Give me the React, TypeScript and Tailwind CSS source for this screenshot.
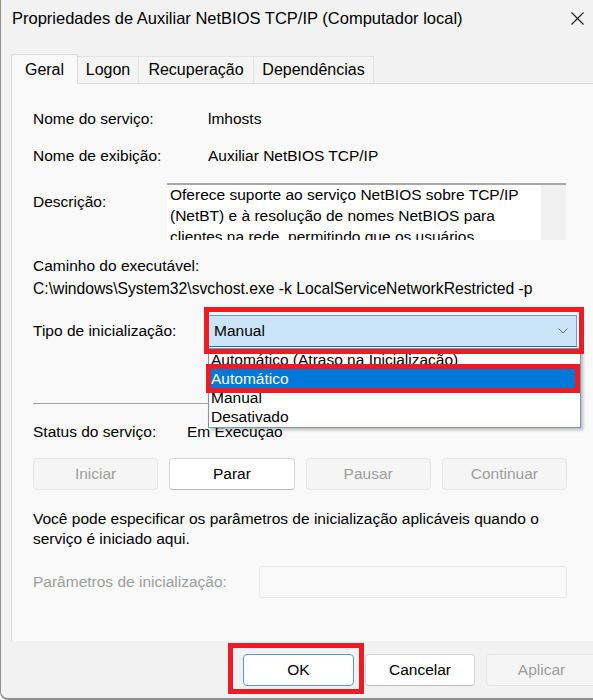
import { JSX } from "react";

const font = "font-['Liberation_Sans',Arial,sans-serif]";

function TabButton({ label, active }: { label: string; active?: boolean }) {
  if (active) {
    return (
      <div className="w-[67px] h-[30px] flex items-center justify-center bg-[#f9f9f9] border border-b-0 border-[#dcdcdc] rounded-t-[3px] -mb-px relative z-10 text-[16px] text-black">
        {label}
      </div>
    );
  }
  return (
    <div className="h-[27px] flex items-center justify-center bg-[#f4f4f4] border border-b-0 border-l-0 border-[#e3e3e3] text-[16px] text-black">
      {label}
    </div>
  );
}

function DialogButton({ label, disabled, primary }: { label: string; disabled?: boolean; primary?: boolean }) {
  const base = "h-[32px] flex items-center justify-center rounded-[4px] text-[15.5px]";
  if (disabled) {
    return <div className={`${base} bg-[#f5f5f5] border border-[#e6e6e6] text-[#9d9d9d]`}>{label}</div>;
  }
  if (primary) {
    return <div className={`${base} bg-white border border-[#5b9bd5] text-black`}>{label}</div>;
  }
  return (
    <div className={`${base} bg-white border border-[#d6d6d6] border-b-[#b9b9b9] text-black`}>{label}</div>
  );
}

export default function App(): JSX.Element {
  return (
    <div
      className={`${font} w-[593px] h-[700px] bg-[#f2f2f2] border-l border-b-2 border-[#8f8f8f] rounded-bl-[8px] flex flex-col overflow-hidden relative`}
    >
      {/* title bar */}
      <div className="h-[37px] flex items-center justify-between pl-[11px] pr-[8px] shrink-0">
        <div className="text-[16.5px] text-black">Propriedades de Auxiliar NetBIOS TCP/IP (Computador local)</div>
        <svg width="13" height="13" viewBox="0 0 13 13" className="mr-[1px]">
          <path d="M0.5 0.5 L12.5 12.5 M12.5 0.5 L0.5 12.5" stroke="#1a1a1a" strokeWidth="1.1" fill="none" />
        </svg>
      </div>

      {/* tabs */}
      <div className="mt-[17px] pl-[10px] flex items-end shrink-0">
        <TabButton label="Geral" active />
        <div className="w-[61px]">
          <TabButton label="Logon" />
        </div>
        <div className="w-[115px]">
          <TabButton label="Recuperação" />
        </div>
        <div className="w-[120px]">
          <TabButton label="Dependências" />
        </div>
      </div>

      {/* panel */}
      <div className="ml-[10px] h-[558px] bg-[#f9f9f9] border-l border-t border-[#dcdcdc] pl-[21px] text-[15.5px] text-black shrink-0 relative">
        <div className="flex mt-[25px] leading-[20px]">
          <div className="w-[175px]">Nome do serviço:</div>
          <div>lmhosts</div>
        </div>
        <div className="flex mt-[17px] leading-[20px]">
          <div className="w-[175px]">Nome de exibição:</div>
          <div>Auxiliar NetBIOS TCP/IP</div>
        </div>
        <div className="flex mt-[17px] items-start">
          <div className="w-[134px] mt-[9px] leading-[20px]">Descrição:</div>
          <div className="w-[399px] h-[57px] bg-white border-t-2 border-[#a8a8a8] flex overflow-hidden">
            <div className="flex-1 pl-[3px] leading-[21px] -mt-[1px]">
              Oferece suporte ao serviço NetBIOS sobre TCP/IP (NetBT) e à resolução de nomes NetBIOS para clientes na rede, permitindo que os usuários
            </div>
            <div className="w-[25px] bg-[#f0f0f0]" />
          </div>
        </div>
        <div className="mt-[16px] leading-[20px]">Caminho do executável:</div>
        <div className="mt-[3px] leading-[20px] text-[15.7px]">C:\windows\System32\svchost.exe -k LocalServiceNetworkRestricted -p</div>

        <div className="flex items-center mt-[16px]">
          <div className="w-[175px] leading-[20px]">Tipo de inicialização:</div>
          <div className="w-[369px] h-[32px] bg-[#cce4f7] border border-[#5c9fd6] border-b-[#0078d4] flex items-center justify-between pl-[5px] pr-[8px]">
            <span>Manual</span>
            <svg width="10" height="6" viewBox="0 0 10 6">
              <path d="M0.5 0.5 L5 5 L9.5 0.5" stroke="#6b6b6b" strokeWidth="1" fill="none" />
            </svg>
          </div>
        </div>

        <div className="mt-[56px] w-[534px] border-t border-[#a0a0a0]" />
        <div className="flex mt-[18px] leading-[20px]">
          <div className="w-[154px]">Status do serviço:</div>
          <div>Em Execução</div>
        </div>

        <div className="mt-[16px] w-[534px] grid grid-cols-4 gap-[11px]">
          <DialogButton label="Iniciar" disabled />
          <DialogButton label="Parar" />
          <DialogButton label="Pausar" disabled />
          <DialogButton label="Continuar" disabled />
        </div>

        <div className="mt-[19px] w-[540px] leading-[20px]">
          Você pode especificar os parâmetros de inicialização aplicáveis quando o serviço é iniciado aqui.
        </div>

        <div className="flex items-center mt-[17px]">
          <div className="w-[226px] leading-[20px] text-[#9d9d9d]">Parâmetros de inicialização:</div>
          <div className="w-[308px] h-[32px] bg-[#f9f9f9] border border-[#e8e8e8] rounded-[3px]" />
        </div>

        {/* open dropdown list */}
        <div className="absolute left-[196px] top-[264px] w-[373px] h-[80px] bg-white border border-[#7d95b8] shadow-[2px_2px_3px_rgba(0,0,0,0.25)] pt-[1px]">
          <div className="h-[19px] leading-[19px] pl-[2px]">Automático (Atraso na Inicialização)</div>
          <div className="h-[19px] leading-[19px] pl-[2px] bg-[#0078d7] text-white">Automático</div>
          <div className="h-[19px] leading-[19px] pl-[2px]">Manual</div>
          <div className="h-[19px] leading-[19px] pl-[2px]">Desativado</div>
        </div>

        {/* red markers */}
        <div className="absolute left-[192px] top-[223px] w-[380px] h-[47px] border-[5px] border-[#ed1c24]" />
        <div className="absolute left-[194px] top-[280px] w-[374px] h-[29px] border-[5px] border-[#ed1c24]" />
      </div>

      {/* footer */}
      <div className="flex-1 flex items-center pl-[242px] gap-[11px]">
        <div className="w-[111px] shrink-0">
          <DialogButton label="OK" primary />
        </div>
        <div className="w-[110px] shrink-0">
          <DialogButton label="Cancelar" />
        </div>
        <div className="w-[111px] shrink-0">
          <DialogButton label="Aplicar" disabled />
        </div>
      </div>
      <div className="absolute left-[227px] top-[643px] w-[136px] h-[51px] border-[5px] border-[#ed1c24]" />
    </div>
  );
}
